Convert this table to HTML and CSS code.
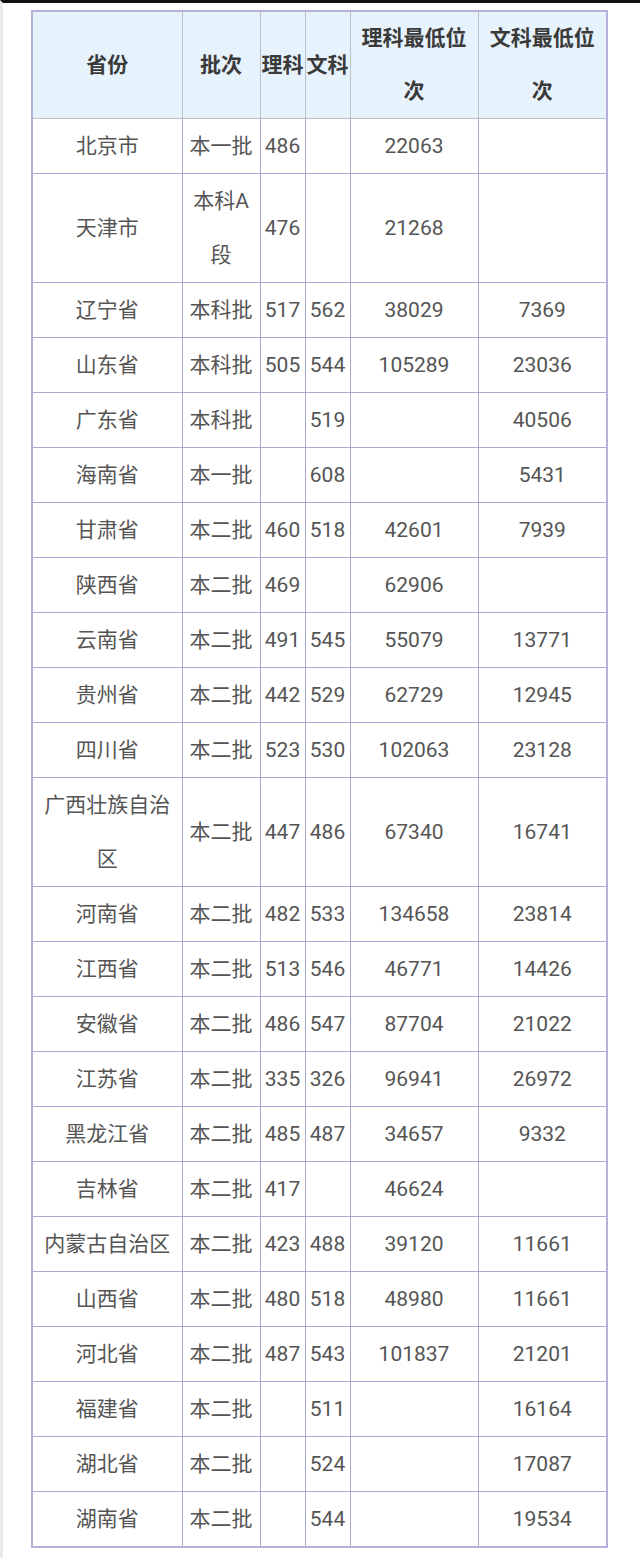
FILE: index.html
```html
<!DOCTYPE html>
<html lang="zh">
<head>
<meta charset="utf-8">
<link rel="stylesheet" href="styles.css">
</head>
<body>
<div class="page">
<table class="score">
<colgroup>
<col class="c-prov"><col class="c-batch"><col class="c-num"><col class="c-num"><col class="c-rank"><col class="c-rank2">
</colgroup>
<thead>
<tr><th>省份</th><th>批次</th><th class="tight">理科</th><th class="tight">文科</th><th>理科最低位次</th><th>文科最低位次</th></tr>
</thead>
<tbody>
<tr><td>北京市</td><td>本一批</td><td class="tight">486</td><td class="tight"></td><td>22063</td><td></td></tr>
<tr><td>天津市</td><td>本科A段</td><td class="tight">476</td><td class="tight"></td><td>21268</td><td></td></tr>
<tr><td>辽宁省</td><td>本科批</td><td class="tight">517</td><td class="tight">562</td><td>38029</td><td>7369</td></tr>
<tr><td>山东省</td><td>本科批</td><td class="tight">505</td><td class="tight">544</td><td>105289</td><td>23036</td></tr>
<tr><td>广东省</td><td>本科批</td><td class="tight"></td><td class="tight">519</td><td></td><td>40506</td></tr>
<tr><td>海南省</td><td>本一批</td><td class="tight"></td><td class="tight">608</td><td></td><td>5431</td></tr>
<tr><td>甘肃省</td><td>本二批</td><td class="tight">460</td><td class="tight">518</td><td>42601</td><td>7939</td></tr>
<tr><td>陕西省</td><td>本二批</td><td class="tight">469</td><td class="tight"></td><td>62906</td><td></td></tr>
<tr><td>云南省</td><td>本二批</td><td class="tight">491</td><td class="tight">545</td><td>55079</td><td>13771</td></tr>
<tr><td>贵州省</td><td>本二批</td><td class="tight">442</td><td class="tight">529</td><td>62729</td><td>12945</td></tr>
<tr><td>四川省</td><td>本二批</td><td class="tight">523</td><td class="tight">530</td><td>102063</td><td>23128</td></tr>
<tr><td>广西壮族自治区</td><td>本二批</td><td class="tight">447</td><td class="tight">486</td><td>67340</td><td>16741</td></tr>
<tr><td>河南省</td><td>本二批</td><td class="tight">482</td><td class="tight">533</td><td>134658</td><td>23814</td></tr>
<tr><td>江西省</td><td>本二批</td><td class="tight">513</td><td class="tight">546</td><td>46771</td><td>14426</td></tr>
<tr><td>安徽省</td><td>本二批</td><td class="tight">486</td><td class="tight">547</td><td>87704</td><td>21022</td></tr>
<tr><td>江苏省</td><td>本二批</td><td class="tight">335</td><td class="tight">326</td><td>96941</td><td>26972</td></tr>
<tr><td>黑龙江省</td><td>本二批</td><td class="tight">485</td><td class="tight">487</td><td>34657</td><td>9332</td></tr>
<tr><td>吉林省</td><td>本二批</td><td class="tight">417</td><td class="tight"></td><td>46624</td><td></td></tr>
<tr><td>内蒙古自治区</td><td>本二批</td><td class="tight">423</td><td class="tight">488</td><td>39120</td><td>11661</td></tr>
<tr><td>山西省</td><td>本二批</td><td class="tight">480</td><td class="tight">518</td><td>48980</td><td>11661</td></tr>
<tr><td>河北省</td><td>本二批</td><td class="tight">487</td><td class="tight">543</td><td>101837</td><td>21201</td></tr>
<tr><td>福建省</td><td>本二批</td><td class="tight"></td><td class="tight">511</td><td></td><td>16164</td></tr>
<tr><td>湖北省</td><td>本二批</td><td class="tight"></td><td class="tight">524</td><td></td><td>17087</td></tr>
<tr><td>湖南省</td><td>本二批</td><td class="tight"></td><td class="tight">544</td><td></td><td>19534</td></tr>
</tbody>
</table>
</div>
</body>
</html>
```
FILE: styles.css
```css
html, body {
  margin: 0;
  padding: 0;
  background: #ffffff;
}
.page {
  border-top: 3px solid #111111;
  border-left: 3px solid #ebebeb;
  padding: 7px 0 12px 28px;
  min-height: 1543px;
  box-sizing: border-box;
  font-family: Roboto, "Noto Sans CJK SC", sans-serif;
}
.score {
  border-collapse: collapse;
  table-layout: fixed;
  width: 576px;
  font-size: 21px;
  border: 2px solid #b4b0d9;
}
.c-prov { width: 150px; }
.c-batch { width: 78px; }
.c-num { width: 45px; }
.c-rank { width: 128px; }
.c-rank2 { width: 129px; }
.score th, .score td {
  padding: 0 3px;
  line-height: 54px;
  text-align: center;
  vertical-align: middle;
  overflow: hidden;
}
.score th.tight, .score td.tight {
  padding: 0 1px;
  white-space: nowrap;
  overflow: visible;
}
.score th {
  line-height: 53px;
  background: #e7f3fc;
  color: #3a3a3a;
  font-weight: bold;
  border: 1px solid #b9c1c8;
}
.score td {
  color: #555555;
  border: 1px solid #aca8d6;
}
```
